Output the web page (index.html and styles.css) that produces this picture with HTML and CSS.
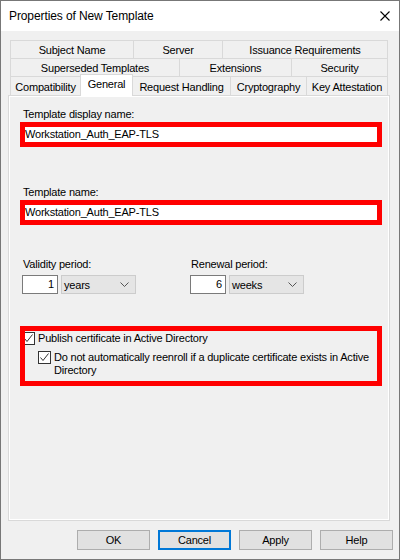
FILE: index.html
```html
<!DOCTYPE html>
<html lang="en">
<head>
  <meta charset="UTF-8">
  <title>Properties of New Template</title>
  <link rel="stylesheet" href="styles.css">
</head>
<body>

  <div class="window">
    <div class="titlebar">
      <span class="title">Properties of New Template</span>
      <svg class="close" width="10" height="10" viewBox="0 0 10 10">
        <path d="M0.5 0.5 L9.5 9.5 M9.5 0.5 L0.5 9.5" stroke="#000" stroke-width="1.1" fill="none"/>
      </svg>
    </div>

    <div class="main">
      <div class="tabs">
        <div class="tab-row row1">
          <div class="tab">Subject Name</div>
          <div class="tab">Server</div>
          <div class="tab">Issuance Requirements</div>
        </div>
        <div class="tab-row row2">
          <div class="tab">Superseded Templates</div>
          <div class="tab">Extensions</div>
          <div class="tab">Security</div>
        </div>
        <div class="tab-row row3">
          <div class="tab">Compatibility</div>
          <div class="tab active">General</div>
          <div class="tab">Request Handling</div>
          <div class="tab">Cryptography</div>
          <div class="tab">Key Attestation</div>
        </div>
      </div>

      <div class="panel">
        <label class="label">Template display name:</label>
        <div class="field">Workstation_Auth_EAP-TLS</div>

        <label class="label label-gap">Template name:</label>
        <div class="field">Workstation_Auth_EAP-TLS</div>

        <div class="periods">
          <div class="period">
            <div class="label">Validity period:</div>
            <div class="period-inputs">
              <div class="num">1</div>
              <div class="select">
                <span>years</span>
                <svg width="9" height="5" viewBox="0 0 9 5"><path d="M0.5 0.5 L4.5 4.5 L8.5 0.5" stroke="#555" fill="none"/></svg>
              </div>
            </div>
          </div>
          <div class="period">
            <div class="label">Renewal period:</div>
            <div class="period-inputs">
              <div class="num">6</div>
              <div class="select">
                <span>weeks</span>
                <svg width="9" height="5" viewBox="0 0 9 5"><path d="M0.5 0.5 L4.5 4.5 L8.5 0.5" stroke="#555" fill="none"/></svg>
              </div>
            </div>
          </div>
        </div>

        <div class="check-group">
          <div class="check-row">
            <span class="box"><svg width="11" height="11" viewBox="0 0 11 11"><path d="M1.5 5.5 L4 8.5 L9.5 1.5" stroke="#333" stroke-width="1" fill="none"/></svg></span>
            <span>Publish certificate in Active Directory</span>
          </div>
          <div class="check-row sub">
            <span class="box"><svg width="11" height="11" viewBox="0 0 11 11"><path d="M1.5 5.5 L4 8.5 L9.5 1.5" stroke="#333" stroke-width="1" fill="none"/></svg></span>
            <span class="check-text">Do not automatically reenroll if a duplicate certificate exists in Active Directory</span>
          </div>
        </div>
      </div>
    </div>

    <div class="buttons">
      <button class="btn">OK</button>
      <button class="btn default">Cancel</button>
      <button class="btn">Apply</button>
      <button class="btn">Help</button>
    </div>
  </div>

</body>
</html>
```

FILE: styles.css
```css
* {
  box-sizing: border-box;
}
body {
  margin: 0;
  font-family: "Liberation Sans", Arial, sans-serif;
  font-size: 11px;
  letter-spacing: -0.2px;
  color: #000;
}
.window {
  width: 400px;
  height: 560px;
  border: 1px solid #777;
  background: #f0f0f0;
  display: flex;
  flex-direction: column;
}
.titlebar {
  height: 30px;
  background: #fff;
  display: flex;
  align-items: center;
  justify-content: space-between;
  padding: 0 9px 0 8px;
}
.title {
  font-size: 12px;
  letter-spacing: -0.1px;
}
.main {
  padding: 9px 8px 0 7px;
}
.tabs {
  margin-left: 2px;
  width: 378px;
}
.tab-row {
  display: grid;
  height: 18px;
}
.row1 {
  grid-template-columns: 123px 89px 166px;
}
.row2 {
  grid-template-columns: 169px 112px 97px;
}
.row3 {
  grid-template-columns: 70px 53px 97px 76px 82px;
  height: 19px;
}
.tab {
  border-top: 1px solid #d9d9d9;
  border-left: 1px solid #d9d9d9;
  display: flex;
  align-items: center;
  justify-content: center;
  padding-top: 1px;
  white-space: nowrap;
}
.tab:last-child {
  border-right: 1px solid #d9d9d9;
}
.row3 .tab {
  padding-top: 2px;
}
.tab.active {
  background: #fff;
  margin: -2px 0 -1px;
  border-right: 1px solid #d9d9d9;
  padding-top: 0;
  padding-bottom: 3px;
  position: relative;
  z-index: 1;
}
.tab.active + .tab {
  border-left: none;
}
.panel {
  width: 382px;
  height: 426px;
  border: 1px solid #d9d9d9;
  box-shadow: inset 1px 1px 0 #fff, inset -1px -1px 0 #fff;
  padding: 12px 7px 0 11px;
}
.label {
  display: block;
  line-height: 13px;
  margin-left: 3px;
}
.label-gap {
  margin-top: 39px;
}
.field {
  margin-top: 1px;
  height: 25px;
  border: 5px solid #ff0000;
  background: #fff;
  line-height: 15px;
  white-space: nowrap;
}
.periods {
  display: grid;
  grid-template-columns: 168px auto;
  margin: 33px 0 0 2px;
}
.period .label {
  margin-left: 1px;
}
.period-inputs {
  display: flex;
  gap: 3px;
  margin-top: 4px;
}
.num {
  width: 36px;
  height: 19px;
  border: 1px solid #7a7a7a;
  background: #fff;
  text-align: right;
  padding-right: 3px;
  line-height: 17px;
}
.select {
  width: 75px;
  height: 19px;
  background: #e5e5e5;
  border: 1px solid #cccccc;
  display: flex;
  align-items: center;
  justify-content: space-between;
  padding: 0 6px 0 2px;
}
.check-group {
  position: relative;
  margin-top: 32px;
  height: 60px;
  padding: 6px 5px 0 2px;
}
.check-group::after {
  content: "";
  position: absolute;
  top: 0;
  left: 0;
  right: 0;
  bottom: 0;
  border: 5px solid #ff0000;
  pointer-events: none;
}
.check-row {
  display: flex;
  align-items: flex-start;
  gap: 3px;
  line-height: 13px;
}
.check-row.sub {
  margin-top: 6px;
  padding-left: 16px;
}
.box {
  flex: none;
  width: 13px;
  height: 13px;
  border: 1px solid #333;
  background: #fff;
}
.box svg {
  display: block;
}
.check-text {
  width: 320px;
}
.buttons {
  display: flex;
  justify-content: flex-end;
  gap: 8px;
  padding: 9px 6px 0 0;
}
.btn {
  width: 73px;
  height: 20px;
  background: #e1e1e1;
  border: 1px solid #adadad;
  font: inherit;
  letter-spacing: -0.2px;
  color: #000;
  padding: 0;
}
.btn.default {
  border: 2px solid #0078d7;
}
```
